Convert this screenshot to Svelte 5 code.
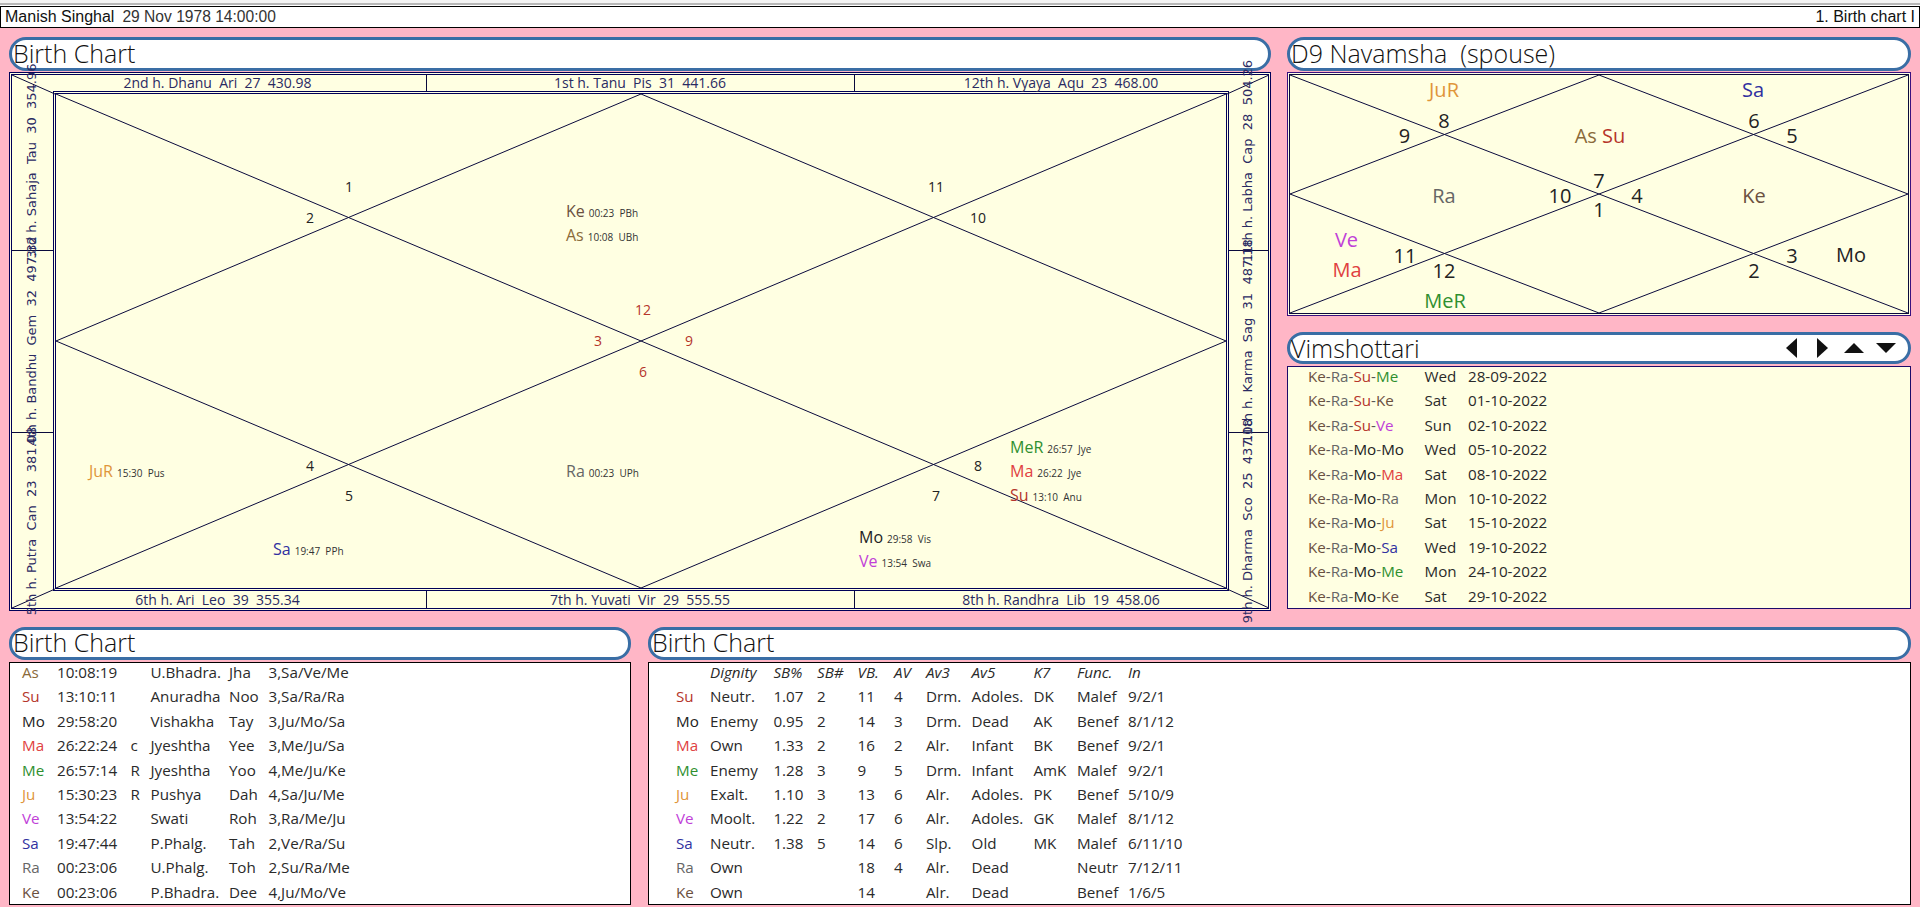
<script>
  const bandTop = [
    { x: 217.5, y: 88, t: '2nd h. Dhanu  Ari  27  430.98' },
    { x: 640, y: 88, t: '1st h. Tanu  Pis  31  441.66' },
    { x: 1061, y: 88, t: '12th h. Vyaya  Aqu  23  468.00' },
    { x: 217.5, y: 605, t: '6th h. Ari  Leo  39  355.34' },
    { x: 640, y: 605, t: '7th h. Yuvati  Vir  29  555.55' },
    { x: 1061, y: 605, t: '8th h. Randhra  Lib  19  458.06' }
  ];
  const bandSide = [
    { x: 36, y: 161, t: '3rd h. Sahaja  Tau  30  354.96' },
    { x: 36, y: 341, t: '4th h. Bandhu  Gem  32  497.32' },
    { x: 36, y: 521, t: '5th h. Putra  Can  23  381.08' },
    { x: 1252, y: 161, t: '11th h. Labha  Cap  28  504.26' },
    { x: 1252, y: 341, t: '10th h. Karma  Sag  31  487.18' },
    { x: 1252, y: 521, t: '9th h. Dharma  Sco  25  437.18' }
  ];
  const mainNums = [
    ['1', 349, 192, 0], ['2', 310, 223, 0], ['12', 643, 315, 1], ['3', 598, 346, 1],
    ['6', 643, 377, 1], ['9', 689, 346, 1], ['4', 310, 471, 0], ['5', 349, 501, 0],
    ['11', 936, 192, 0], ['10', 978, 223, 0], ['8', 978, 471, 0], ['7', 936, 501, 0]
  ];
  const mainPlanets = [
    ['Ke', 'Ke', '00:23  PBh', 566, 217], ['As', 'As', '10:08  UBh', 566, 241],
    ['Ra', 'Ra', '00:23  UPh', 566, 477], ['Ju', 'JuR', '15:30  Pus', 89, 477],
    ['Sa', 'Sa', '19:47  PPh', 273, 555], ['Me', 'MeR', '26:57  Jye', 1010, 453],
    ['Ma', 'Ma', '26:22  Jye', 1010, 477], ['Su', 'Su', '13:10  Anu', 1010, 501],
    ['Mo', 'Mo', '29:58  Vis', 859, 543], ['Ve', 'Ve', '13:54  Swa', 859, 567]
  ];
  const d9Nums = [
    ['8', 1444, 128], ['9', 1404.5, 143], ['6', 1754, 128], ['5', 1792, 143],
    ['7', 1599, 188], ['10', 1560, 203], ['4', 1637, 203], ['1', 1599, 217],
    ['11', 1405, 263], ['12', 1444, 278], ['3', 1792, 263], ['2', 1754, 278]
  ];
  const d9Planets = [
    ['Ju', 'JuR', 1444, 97], ['Sa', 'Sa', 1753, 97], ['Ra', 'Ra', 1444, 203],
    ['Ke', 'Ke', 1754, 203], ['Ve', 'Ve', 1346.5, 247], ['Ma', 'Ma', 1347, 277],
    ['Me', 'MeR', 1445, 308], ['Mo', 'Mo', 1851, 262]
  ];
  const dasha = [
    [['Ke', 'Ke'], ['Ra', 'Ra'], ['Su', 'Su'], ['Me', 'Me'], 'Wed', '28-09-2022'],
    [['Ke', 'Ke'], ['Ra', 'Ra'], ['Su', 'Su'], ['Ke', 'Ke'], 'Sat', '01-10-2022'],
    [['Ke', 'Ke'], ['Ra', 'Ra'], ['Su', 'Su'], ['Ve', 'Ve'], 'Sun', '02-10-2022'],
    [['Ke', 'Ke'], ['Ra', 'Ra'], ['Mo', 'Mo'], ['Mo', 'Mo'], 'Wed', '05-10-2022'],
    [['Ke', 'Ke'], ['Ra', 'Ra'], ['Mo', 'Mo'], ['Ma', 'Ma'], 'Sat', '08-10-2022'],
    [['Ke', 'Ke'], ['Ra', 'Ra'], ['Mo', 'Mo'], ['Ra', 'Ra'], 'Mon', '10-10-2022'],
    [['Ke', 'Ke'], ['Ra', 'Ra'], ['Mo', 'Mo'], ['Ju', 'Ju'], 'Sat', '15-10-2022'],
    [['Ke', 'Ke'], ['Ra', 'Ra'], ['Mo', 'Mo'], ['Sa', 'Sa'], 'Wed', '19-10-2022'],
    [['Ke', 'Ke'], ['Ra', 'Ra'], ['Mo', 'Mo'], ['Me', 'Me'], 'Mon', '24-10-2022'],
    [['Ke', 'Ke'], ['Ra', 'Ra'], ['Mo', 'Mo'], ['Ke', 'Ke'], 'Sat', '29-10-2022']
  ];
  const positions = [
    ['As', '10:08:19', '', 'U.Bhadra.', 'Jha', '3,Sa/Ve/Me'],
    ['Su', '13:10:11', '', 'Anuradha', 'Noo', '3,Sa/Ra/Ra'],
    ['Mo', '29:58:20', '', 'Vishakha', 'Tay', '3,Ju/Mo/Sa'],
    ['Ma', '26:22:24', 'c', 'Jyeshtha', 'Yee', '3,Me/Ju/Sa'],
    ['Me', '26:57:14', 'R', 'Jyeshtha', 'Yoo', '4,Me/Ju/Ke'],
    ['Ju', '15:30:23', 'R', 'Pushya', 'Dah', '4,Sa/Ju/Me'],
    ['Ve', '13:54:22', '', 'Swati', 'Roh', '3,Ra/Me/Ju'],
    ['Sa', '19:47:44', '', 'P.Phalg.', 'Tah', '2,Ve/Ra/Su'],
    ['Ra', '00:23:06', '', 'U.Phalg.', 'Toh', '2,Su/Ra/Me'],
    ['Ke', '00:23:06', '', 'P.Bhadra.', 'Dee', '4,Ju/Mo/Ve']
  ];
  const heads = ['', 'Dignity', 'SB%', 'SB#', 'VB.', 'AV', 'Av3', 'Av5', 'K7', 'Func.', 'In'];
  const strengths = [
    ['Su', 'Neutr.', '1.07', '2', '11', '4', 'Drm.', 'Adoles.', 'DK', 'Malef', '9/2/1'],
    ['Mo', 'Enemy', '0.95', '2', '14', '3', 'Drm.', 'Dead', 'AK', 'Benef', '8/1/12'],
    ['Ma', 'Own', '1.33', '2', '16', '2', 'Alr.', 'Infant', 'BK', 'Benef', '9/2/1'],
    ['Me', 'Enemy', '1.28', '3', '9', '5', 'Drm.', 'Infant', 'AmK', 'Malef', '9/2/1'],
    ['Ju', 'Exalt.', '1.10', '3', '13', '6', 'Alr.', 'Adoles.', 'PK', 'Benef', '5/10/9'],
    ['Ve', 'Moolt.', '1.22', '2', '17', '6', 'Alr.', 'Adoles.', 'GK', 'Malef', '8/1/12'],
    ['Sa', 'Neutr.', '1.38', '5', '14', '6', 'Slp.', 'Old', 'MK', 'Malef', '6/11/10'],
    ['Ra', 'Own', '', '', '18', '4', 'Alr.', 'Dead', '', 'Neutr', '7/12/11'],
    ['Ke', 'Own', '', '', '14', '', 'Alr.', 'Dead', '', 'Benef', '1/6/5']
  ];
</script>

<div class="page">
  <div class="strip"></div>
  <header class="head">
    <div><span class="name">Manish Singhal</span><span class="dob">29 Nov 1978 14:00:00</span></div>
    <div class="tab">1. Birth chart I</div>
  </header>

  <div class="upper">
    <section class="main">
      <h2 class="title">Birth Chart</h2>
      <svg class="chart" viewBox="9 72 1262 539" width="1262" height="539" aria-label="Birth chart">
        <rect class="paper" x="9.5" y="72.5" width="1261" height="538" />
        <rect class="rule" x="9.5" y="72.5" width="1261" height="538" />
        <rect class="rule" x="11.5" y="74.5" width="1257" height="534" />
        <rect class="rule" x="53.5" y="91.5" width="1175" height="499" />
        <rect class="rule" x="55.5" y="93.5" width="1171" height="495" />
        <path class="thin" d="M426.5 74V91M854.5 74V91M426.5 591V608M854.5 591V608M12 250.5H53M12 432.5H53M1229 250.5H1269M1229 432.5H1269" />
        <path class="thin" d="M12 75L55 94M1269 75L1227 94M12 608L55 589M1269 608L1227 589" />
        <path class="thin" d="M56 94L1226 588M1226 94L56 588M641 94L1226 341L641 588L56 341Z" />
        {#each bandTop as b}
          <text class="band" x={b.x} y={b.y}>{b.t}</text>
        {/each}
        {#each bandSide as b}
          <text class="side" x={b.x} y={b.y} transform="rotate(-90 {b.x} {b.y})">{b.t}</text>
        {/each}
        {#each mainNums as [n, x, y, red]}
          <text class="num" class:red={red === 1} {x} {y}>{n}</text>
        {/each}
        {#each mainPlanets as [c, label, sub, x, y]}
          <text class="planet" {x} {y}><tspan class={c}>{label}</tspan><tspan class="sub" dx="4">{sub}</tspan></text>
        {/each}
      </svg>
    </section>

    <section class="aside">
      <h2 class="title">D9 Navamsha&nbsp; (spouse)</h2>
      <svg class="d9" viewBox="1287 72 624 244" width="624" height="244" aria-label="D9 chart">
        <rect class="paper" x="1287.5" y="72.5" width="623" height="243" />
        <rect class="rule purple" x="1287.5" y="72.5" width="623" height="243" />
        <rect class="thin" x="1289.5" y="74.5" width="619" height="239" />
        <path class="thin" d="M1290 75L1908 313M1908 75L1290 313M1599 75L1908 194L1599 313L1290 194Z" />
        {#each d9Nums as [n, x, y]}
          <text class="big" {x} {y}>{n}</text>
        {/each}
        {#each d9Planets as [c, label, x, y]}
          <text class="big {c}" {x} {y}>{label}</text>
        {/each}
        <text class="big" x="1600" y="143"><tspan class="As">As</tspan> <tspan class="Su">Su</tspan></text>
      </svg>

      <div class="title vim">
        <h2>Vimshottari</h2>
        <div class="arrows">
          <svg width="11" height="20" viewBox="0 0 11 20"><path d="M11 0V20L0 10Z" /></svg>
          <svg width="11" height="20" viewBox="0 0 11 20"><path d="M0 0V20L11 10Z" /></svg>
          <svg width="20" height="10" viewBox="0 0 20 10"><path d="M10 0L20 10H0Z" /></svg>
          <svg width="20" height="10" viewBox="0 0 20 10"><path d="M0 0H20L10 10Z" /></svg>
        </div>
      </div>
      <div class="list dasha">
        {#each dasha as r}
          <div class="row dasharow">
            <span>{#each r.slice(0, 4) as p, i}{#if i > 0}<span class="dash">-</span>{/if}<span class={p[0]}>{p[1]}</span>{/each}</span>
            <span>{r[4]}</span>
            <span>{r[5]}</span>
          </div>
        {/each}
      </div>
    </section>
  </div>

  <div class="lower">
    <section class="left">
      <h2 class="title">Birth Chart</h2>
      <div class="list white pos">
        {#each positions as r}
          <div class="row posrow">
            <span class={r[0]}>{r[0]}</span>
            {#each r.slice(1) as cell}<span>{cell}</span>{/each}
          </div>
        {/each}
      </div>
    </section>
    <section class="right">
      <h2 class="title">Birth Chart</h2>
      <div class="list white str">
        <div class="row strrow headrow">
          {#each heads as h}<span>{h}</span>{/each}
        </div>
        {#each strengths as r}
          <div class="row strrow">
            <span class={r[0]}>{r[0]}</span>
            {#each r.slice(1) as cell}<span>{cell}</span>{/each}
          </div>
        {/each}
      </div>
    </section>
  </div>
</div>

<style>
  :global(body) {
    margin: 0;
    background: #ffb6c6;
  }
  .page {
    width: 1920px;
    height: 907px;
    overflow: hidden;
    font-family: 'Open Sans', 'Noto Sans', sans-serif;
    color: #222;
  }
  .strip {
    height: 6px;
    box-sizing: border-box;
    background: #fff;
    border-top: 3px solid #f4f4f4;
    border-bottom: 1px solid #fff;
    box-shadow: inset 0 -2px 0 #b8b8b8;
  }
  .head {
    height: 22px;
    box-sizing: border-box;
    border: 1px solid #000;
    background: #fff;
    display: flex;
    justify-content: space-between;
    align-items: center;
    padding: 0 4px;
    font-family: 'Liberation Sans', sans-serif;
    font-size: 15.6px;
    color: #111;
  }
  .name {
    margin-right: 8px;
    font-size: 16px;
  }
  .dob {
    color: #333;
  }
  .tab {
    font-size: 16px;
  }
  .upper {
    display: flex;
    gap: 16px;
    padding: 9px 9px 0;
  }
  .main {
    width: 1262px;
  }
  .aside {
    width: 624px;
  }
  .title {
    margin: 0;
    height: 34px;
    box-sizing: border-box;
    border: 3px solid #3a6ea5;
    border-radius: 17px;
    background: #fff;
    padding-left: 1px;
    font-size: 25px;
    font-weight: 300;
    line-height: 26px;
    color: #111;
  }
  .title.vim {
    display: flex;
    justify-content: space-between;
    align-items: center;
    height: 32px;
    margin-top: 16px;
    padding-right: 12px;
    border-radius: 16px;
  }
  .vim h2 {
    margin: 0;
    font: inherit;
  }
  .arrows {
    display: flex;
    align-items: center;
    gap: 20px;
  }
  .arrows svg {
    display: block;
  }
  .arrows svg:nth-child(3) {
    margin-left: -4px;
  }
  .arrows svg:nth-child(4) {
    margin-left: -8px;
  }
  .arrows path {
    fill: #111;
  }
  .chart, .d9 {
    display: block;
    overflow: visible;
    margin-top: 1px;
  }
  .paper {
    fill: #ffffe2;
  }
  .rule {
    fill: none;
    stroke: #000058;
    stroke-width: 1;
  }
  .purple {
    stroke: #3a1080;
  }
  .thin {
    fill: none;
    stroke: #0a0a3c;
    stroke-width: 1;
  }
  svg text {
    font-family: 'Open Sans', sans-serif;
    white-space: pre;
  }
  .band {
    font-size: 14px;
    text-anchor: middle;
    fill: #2a2a62;
  }
  .side {
    font-family: 'DejaVu Sans', sans-serif;
    font-size: 13px;
    text-anchor: middle;
    fill: #2a2a62;
  }
  .num {
    font-size: 14px;
    text-anchor: middle;
    fill: #222;
  }
  .num.red {
    fill: #b5352a;
  }
  .planet {
    font-size: 16px;
  }
  .sub {
    font-size: 10px;
    fill: #333;
  }
  .big {
    font-size: 20px;
    text-anchor: middle;
    fill: #222;
  }
  .list {
    box-sizing: border-box;
    border: 1px solid #10105a;
    background: #ffffe2;
    height: 243px;
    overflow: hidden;
  }
  .dasha {
    margin-top: 2px;
    padding-left: 20px;
    border-color: #1c0a6a;
  }
  .white {
    background: #fff;
    border-color: #000;
    margin-top: 2px;
  }
  .row {
    display: grid;
    height: 24.4px;
    line-height: 18px;
    font-size: 15.2px;
    color: #2a2a2a;
    white-space: pre;
  }
  .dasharow {
    grid-template-columns: 116.5px 43.5px 1fr;
  }
  .dash {
    color: #555;
  }
  .posrow {
    grid-template-columns: 35px 73.5px 20px 78.5px 39.5px 1fr;
  }
  .pos {
    padding-left: 12px;
  }
  .strrow {
    grid-template-columns: 34px 63.4px 43.6px 40.6px 36.4px 32px 45.6px 61.9px 43.5px 51px 1fr;
  }
  .str {
    padding-left: 27px;
  }
  .headrow {
    font-style: italic;
  }
  .lower {
    display: flex;
    gap: 17px;
    padding: 16px 9px 0;
  }
  .left {
    width: 622px;
  }
  .right {
    width: 1263px;
  }
  .lower .title {
    height: 33px;
    border-radius: 16px;
    line-height: 25px;
  }
  .Su { color: #b5352a; fill: #b5352a; }
  .Mo { color: #222; fill: #222; }
  .Ma { color: #e04040; fill: #e04040; }
  .Me { color: #2f8f2f; fill: #2f8f2f; }
  .Ju { color: #e0953a; fill: #e0953a; }
  .Ve { color: #c040d8; fill: #c040d8; }
  .Sa { color: #3030a0; fill: #3030a0; }
  .Ra { color: #666; fill: #666; }
  .Ke { color: #6b5040; fill: #6b5040; }
  .As { color: #8a6a3a; fill: #8a6a3a; }
</style>
